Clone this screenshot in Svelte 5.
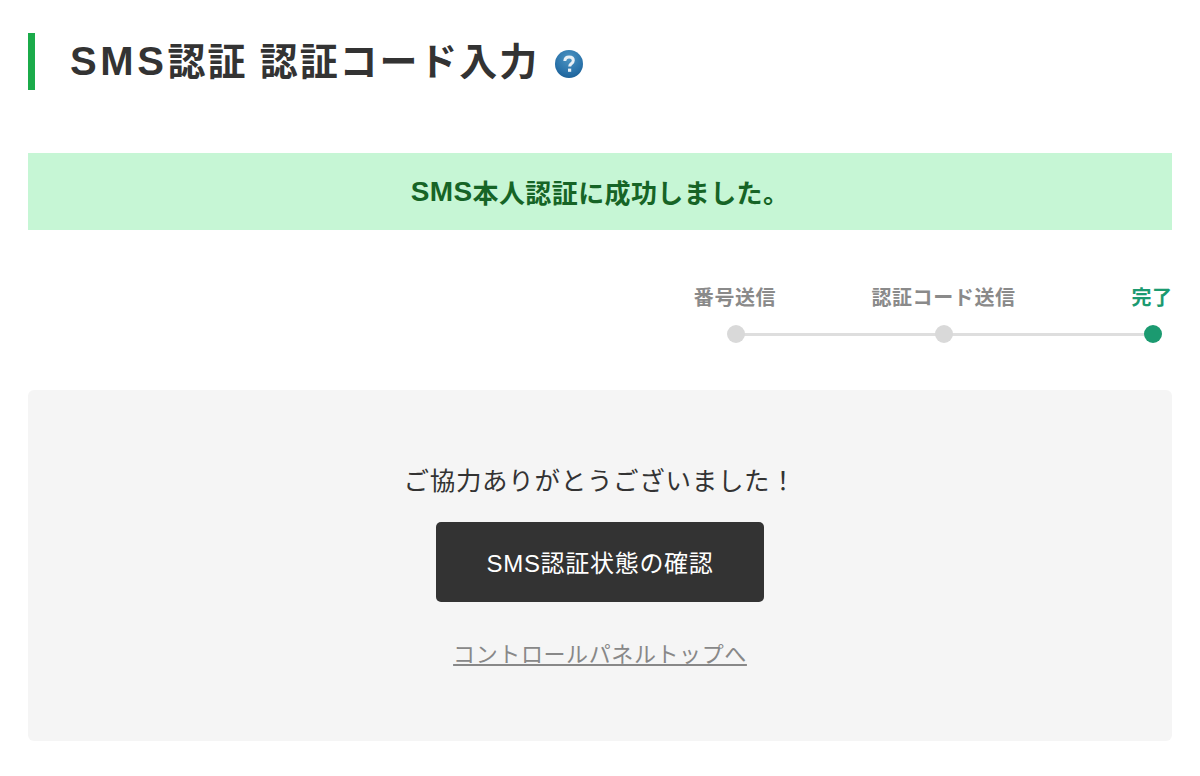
<script lang="ts">
	const steps = [
		{ label: '番号送信', done: false },
		{ label: '認証コード送信', done: false },
		{ label: '完了', done: true }
	];
</script>

<div class="page">
	<header class="page-head">
		<h1><span class="latin">SMS</span>認証 認証コード入力</h1>
		<svg class="help" width="28" height="28" viewBox="0 0 28 28" aria-hidden="true">
			<defs>
				<radialGradient id="helpBg" cx="0.5" cy="0.3" r="0.8">
					<stop offset="0" stop-color="#4d94c2" />
					<stop offset="0.6" stop-color="#2b74ab" />
					<stop offset="1" stop-color="#165a91" />
				</radialGradient>
			</defs>
			<circle cx="14" cy="14" r="14" fill="url(#helpBg)" />
			<path d="M9.8 11c.2-2.6 1.9-4 4.3-4 2.5 0 4.2 1.4 4.2 3.5 0 1.5-.9 2.4-2 3.2-1.1.8-1.6 1.4-1.6 2.8" fill="none" stroke="#e8f0f6" stroke-width="3" />
			<rect x="13" y="18.6" width="3.2" height="3.2" fill="#e8f0f6" />
		</svg>
	</header>

	<div class="notice"><span class="latin">SMS</span>本人認証に成功しました。</div>

	<ol class="steps">
		{#each steps as step}
			<li class="step" class:done={step.done}>
				<span class="label">{step.label}</span>
				<span class="dot"></span>
			</li>
		{/each}
	</ol>

	<section class="panel">
		<p class="thanks">ご協力ありがとうございました！</p>
		<a class="btn" href="#status">SMS認証状態の確認</a>
		<a class="top-link" href="#top">コントロールパネルトップへ</a>
	</section>
</div>

<style>
	:global(body) {
		background: #fff;
		font-family: 'Liberation Sans', 'Noto Sans CJK JP', sans-serif;
		color: #333;
	}

	.page {
		padding: 33px 28px 35px;
	}

	.page-head {
		display: flex;
		align-items: center;
		gap: 16px;
		height: 57px;
		padding-left: 35px;
		border-left: 7px solid #1bab4a;
	}

	h1 {
		margin: 0 0 6px;
		font-size: 38px;
		font-weight: 700;
		letter-spacing: 1.9px;
		white-space: nowrap;
	}

	h1 .latin {
		font-size: 40px;
		letter-spacing: 3.6px;
	}

	.help {
		margin-top: 5px;
	}

	.notice {
		margin-top: 63px;
		height: 77px;
		display: flex;
		align-items: center;
		justify-content: center;
		background: #c6f6d5;
		color: #166426;
		font-size: 26px;
		font-weight: 700;
		letter-spacing: 0.4px;
	}

	.notice .latin {
		font-size: 28px;
	}

	.steps {
		list-style: none;
		margin: 56px 0 0;
		padding: 0;
		display: flex;
		justify-content: flex-end;
		gap: 168.5px;
	}

	.step {
		position: relative;
		width: 40px;
		display: flex;
		flex-direction: column;
		align-items: center;
		gap: 15px;
		color: #8a8a8a;
		font-size: 20px;
		font-weight: 700;
		letter-spacing: 0.6px;
	}

	.label {
		white-space: nowrap;
		line-height: 24px;
	}

	.dot {
		position: relative;
		z-index: 1;
		width: 18px;
		height: 18px;
		margin-left: 1px;
		border-radius: 50%;
		background: #d9d9d9;
	}

	.step:not(:last-child)::after {
		content: '';
		position: absolute;
		left: 20px;
		bottom: 7px;
		width: 208.5px;
		height: 3px;
		background: #dedede;
	}

	.step.done {
		color: #1b9a70;
	}

	.step.done .dot {
		margin-left: 2px;
		background: #1b9a70;
	}

	.panel {
		margin-top: 47px;
		height: 351px;
		box-sizing: border-box;
		padding-top: 73px;
		display: flex;
		flex-direction: column;
		align-items: center;
		background: #f5f5f5;
		border-radius: 6px;
	}

	.thanks {
		margin: 0;
		font-size: 25.5px;
		line-height: 36px;
		letter-spacing: 0.7px;
	}

	.btn {
		margin-top: 23px;
		width: 328px;
		height: 80px;
		box-sizing: border-box;
		padding-bottom: 2px;
		display: flex;
		align-items: center;
		justify-content: center;
		background: #333;
		color: #fff;
		border-radius: 5px;
		font-size: 24px;
		letter-spacing: 0.7px;
		text-decoration: none;
	}

	.top-link {
		margin-top: 35px;
		color: #888;
		font-size: 22px;
		line-height: 36px;
		letter-spacing: 0.6px;
	}
</style>
